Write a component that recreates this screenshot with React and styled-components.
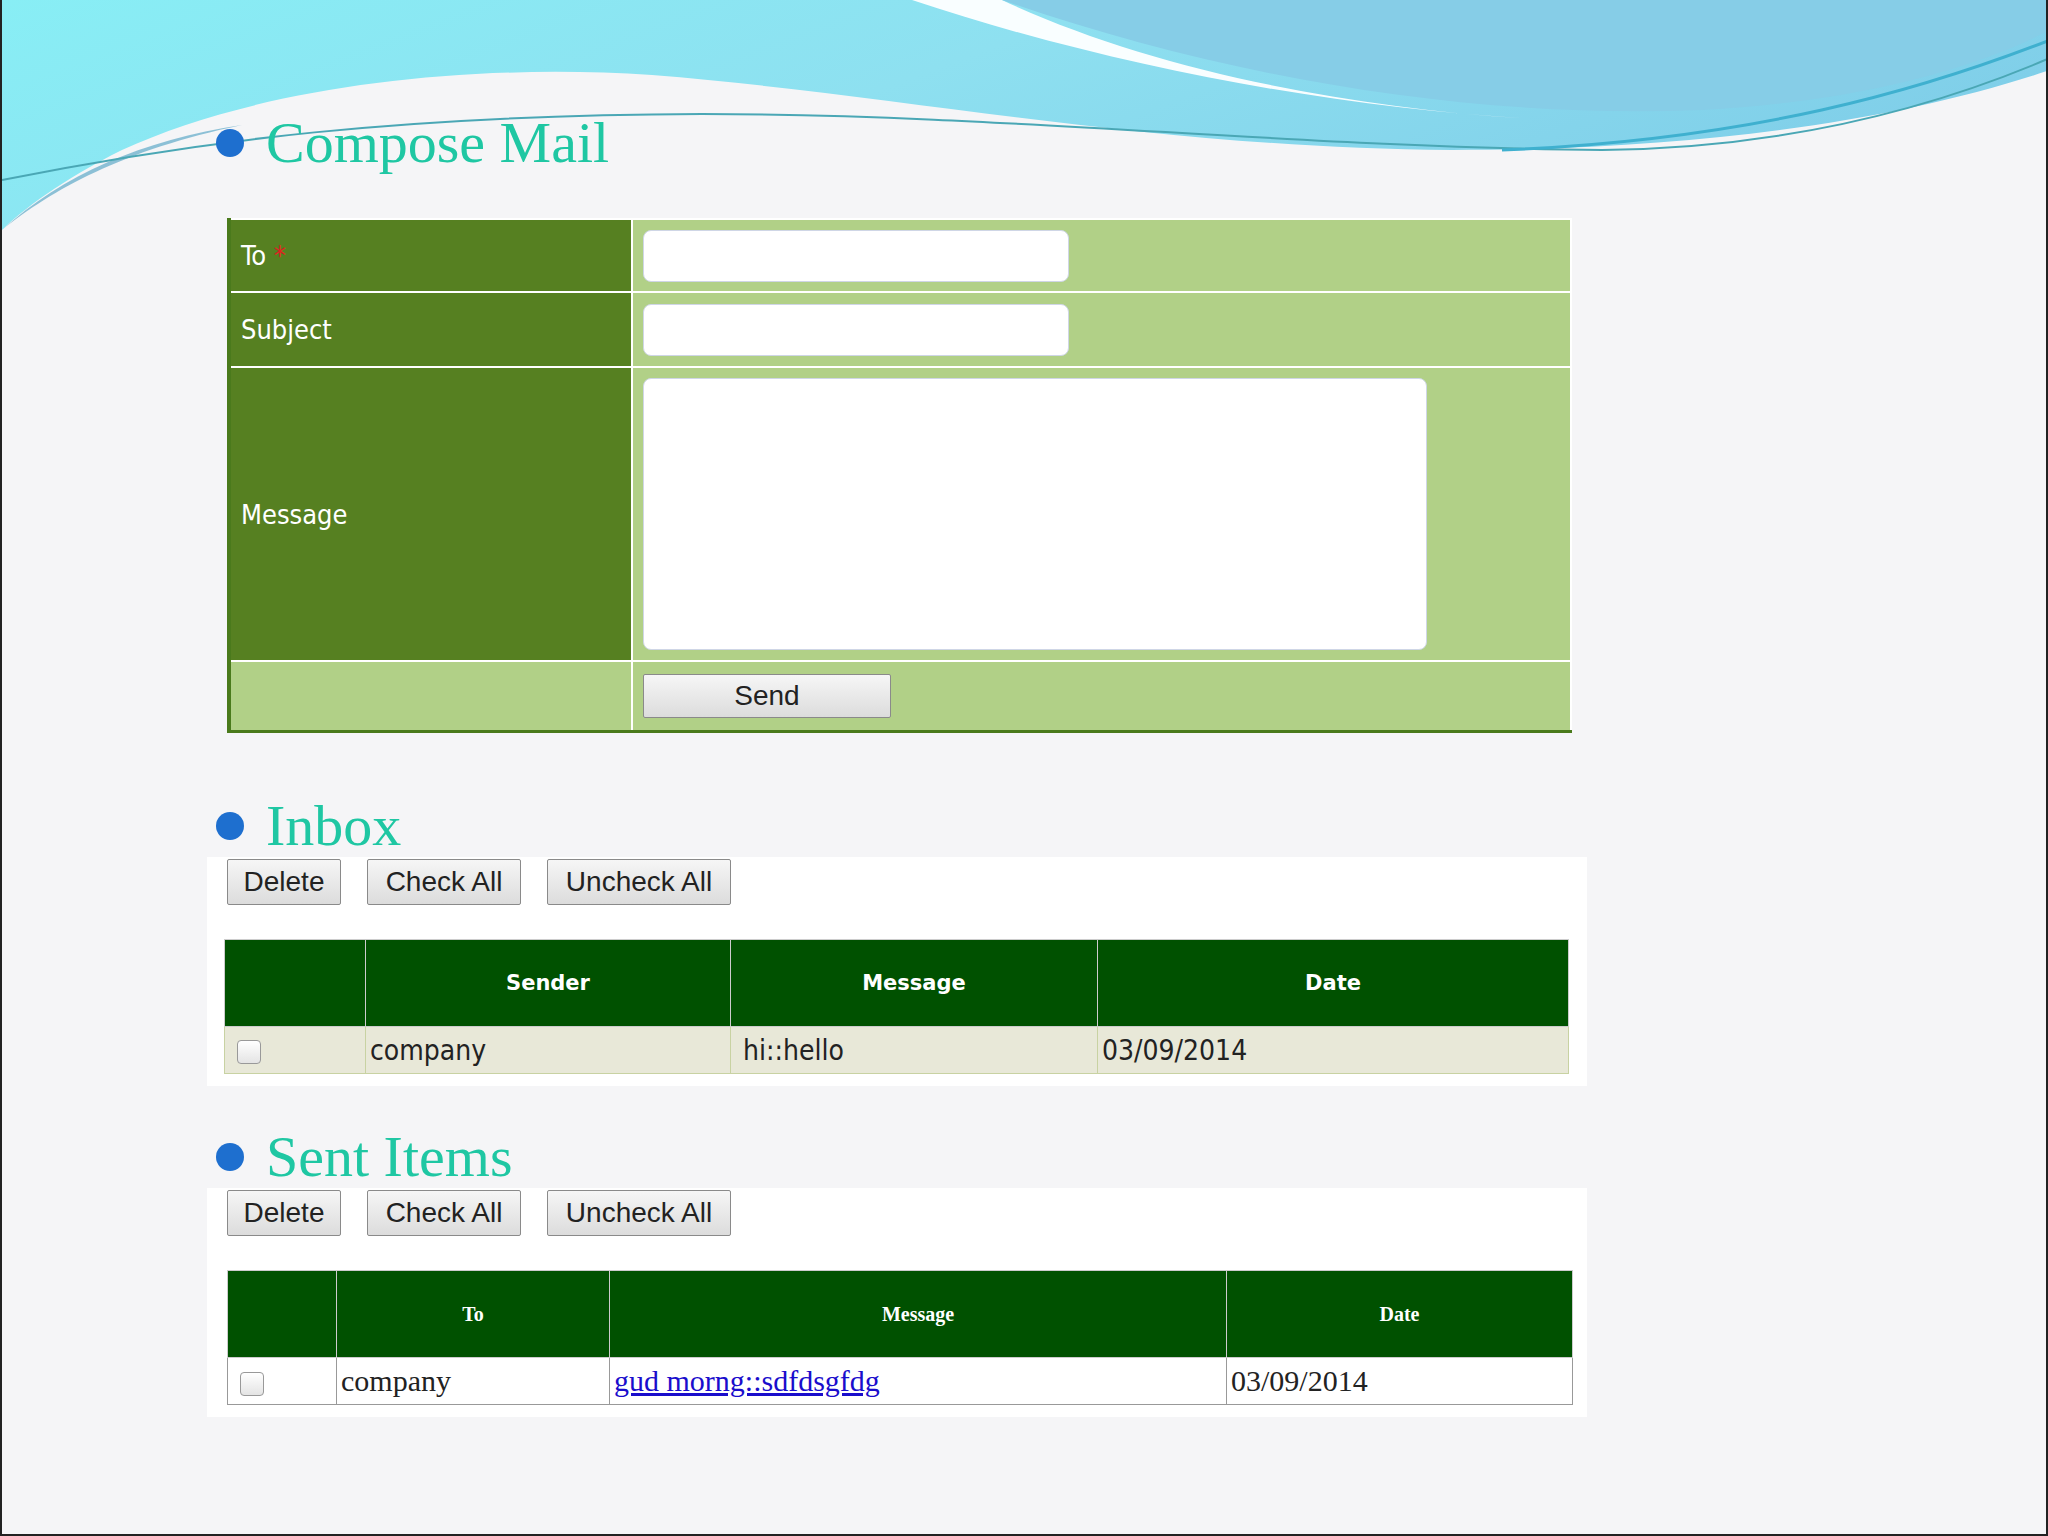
import React from "react";
import styled, { createGlobalStyle } from "styled-components";

const Global = createGlobalStyle`
  html, body { margin: 0; padding: 0; }
  body { background: #f4f4f6; font-family: "DejaVu Sans", Verdana, sans-serif; }
`;

const Page = styled.div`
  position: relative;
  width: 2048px;
  height: 1536px;
  overflow: hidden;
  background: #f5f5f7;
  box-sizing: border-box;
  border: 2px solid #222;
  border-top: none;
`;

const Wave = styled.svg`
  position: absolute;
  left: 0;
  top: 0;
`;

const Content = styled.div`
  position: relative;
  padding: 108px 0 0 212px;
  width: 1380px;
`;

const Title = styled.h2`
  display: flex;
  align-items: center;
  gap: 22px;
  margin: 0;
  font-family: "Liberation Serif", serif;
  font-weight: normal;
  font-size: 58px;
  line-height: 70px;
  color: #1fc7a3;
  &::before {
    content: "";
    width: 28px;
    height: 28px;
    border-radius: 50%;
    background: #1e6fcf;
    margin-left: 2px;
  }
`;

const FormTable = styled.table`
  margin: 40px 0 0 13px;
  width: 1345px;
  border-collapse: collapse;
  border-left: 4px solid #4a7a1c;
  border-bottom: 3px solid #4a7a1c;
  td {
    border: 2px solid #fff;
    padding: 0 10px;
  }
`;

const Label = styled.td`
  width: 380px;
  background: ${(p) => (p.$light ? "#b1d087" : "#568021")};
  color: #fff;
  font-family: "DejaVu Sans Condensed", "DejaVu Sans", sans-serif;
  font-size: 27px;
  height: ${(p) => p.$h}px;
`;

const Field = styled.td`
  background: #b1d087;
`;

const Input = styled.div`
  width: 424px;
  height: 50px;
  background: #fff;
  border: 1px solid #cfd6e6;
  border-radius: 8px;
`;

const Area = styled.div`
  width: 782px;
  height: 270px;
  background: #fff;
  border: 1px solid #cfd6e6;
  border-radius: 8px;
`;

const Btn = styled.button`
  font-family: "Liberation Sans Narrow", "Liberation Sans", Arial, sans-serif;
  font-size: 28px;
  color: #222;
  background: linear-gradient(#f6f6f6, #dcdcdc);
  border: 1px solid #8a8a8a;
  border-radius: 2px;
  height: ${(p) => p.$h || 46}px;
  width: ${(p) => p.$w}px;
  padding: 0;
`;

const Panel = styled.div`
  margin: -4px 0 0 -7px;
  width: 1380px;
  background: #fff;
  padding: 2px 0 12px 20px;
  box-sizing: border-box;
`;

const Buttons = styled.div`
  display: flex;
  gap: 26px;
  margin-bottom: 34px;
`;

const Grid = styled.table`
  border-collapse: collapse;
  width: ${(p) => p.$w}px;
  th {
    background: #005100;
    color: #fff;
    height: 84px;
    border: 1px solid #ccc;
    font-family: ${(p) => (p.$serif ? '"Liberation Serif", serif' : '"DejaVu Sans", sans-serif')};
    font-size: ${(p) => (p.$serif ? 20 : 21)}px;
    font-weight: bold;
  }
  td {
    background: ${(p) => (p.$serif ? "#fff" : "#e8e8d8")};
    border: 1px solid ${(p) => (p.$serif ? "#999" : "#c8d2a2")};
    height: 46px;
    padding: 0 4px;
    font-family: ${(p) => (p.$serif ? '"Liberation Serif", serif' : '"DejaVu Sans Condensed", "DejaVu Sans", sans-serif')};
    font-size: ${(p) => (p.$serif ? 30 : 28)}px;
    color: #222;
  }
`;

const Box = styled.span`
  display: inline-block;
  width: 22px;
  height: 22px;
  border: 1px solid #999;
  border-radius: 4px;
  background: linear-gradient(#fff, #e4e4e4);
  margin-left: 8px;
  vertical-align: middle;
`;

const Link = styled.a`
  color: #1a0dcc;
  text-decoration: underline;
`;

function Toolbar() {
  return (
    <Buttons>
      <Btn $w={114}>Delete</Btn>
      <Btn $w={154}>Check All</Btn>
      <Btn $w={184}>Uncheck All</Btn>
    </Buttons>
  );
}

export default function App() {
  return (
    <Page>
      <Global />
      <Wave width="2048" height="240" viewBox="0 0 2048 240">
        <defs>
          <linearGradient id="g1" x1="0" x2="1" y1="0" y2="0.3">
            <stop offset="0" stopColor="#88eef5" />
            <stop offset="0.5" stopColor="#8ee0f0" />
            <stop offset="1" stopColor="#80cfe9" />
          </linearGradient>
          <linearGradient id="g2" x1="0" x2="1">
            <stop offset="0" stopColor="#6cb9db" />
            <stop offset="1" stopColor="#8bd2ea" />
          </linearGradient>
        </defs>
        <path d="M0 0 H2048 V70 C1900 120 1700 150 1450 150 C1150 148 900 95 650 75 C450 62 250 90 120 150 C60 180 20 210 0 230 Z" fill="url(#g1)" />
        <path d="M0 230 C60 175 140 140 240 125 C120 150 50 190 0 230 Z" fill="#5fa9c8" opacity="0.7" />
        <path d="M910 0 H1000 C1150 70 1350 110 1550 120 C1350 110 1120 70 910 0 Z" fill="#ffffff" opacity="0.95" />
        <path d="M1000 0 C1200 70 1450 120 1700 110 C1880 100 1990 60 2048 30 V0 Z" fill="#86cde7" />
        <path d="M0 180 C200 140 400 115 700 114 C1000 114 1300 148 1600 150 C1800 148 1950 100 2048 58" stroke="#4aa7b5" strokeWidth="2" fill="none" />
        <path d="M1500 150 C1750 140 1920 90 2048 40" stroke="#3fb0cf" strokeWidth="3" fill="none" />
      </Wave>
      <Content>
        <Title>Compose Mail</Title>
        <FormTable>
          <tbody>
            <tr>
              <Label $h={71}>
                To <span style={{ color: "#e02020" }}>*</span>
              </Label>
              <Field><Input /></Field>
            </tr>
            <tr>
              <Label $h={73}>Subject</Label>
              <Field><Input /></Field>
            </tr>
            <tr>
              <Label $h={292}>Message</Label>
              <Field><Area /></Field>
            </tr>
            <tr>
              <Label $h={68} $light />
              <Field><Btn $w={248} $h={44}>Send</Btn></Field>
            </tr>
          </tbody>
        </FormTable>

        <div style={{ height: 58 }} />
        <Title>Inbox</Title>
        <Panel>
          <Toolbar />
          <Grid $w={1345} style={{ marginLeft: -3 }}>
            <thead>
              <tr>
                <th style={{ width: 138 }} />
                <th style={{ width: 362 }}>Sender</th>
                <th style={{ width: 364 }}>Message</th>
                <th>Date</th>
              </tr>
            </thead>
            <tbody>
              <tr>
                <td><Box /></td>
                <td>company</td>
                <td>&nbsp;hi::hello</td>
                <td>03/09/2014</td>
              </tr>
            </tbody>
          </Grid>
        </Panel>

        <div style={{ height: 36 }} />
        <Title>Sent Items</Title>
        <Panel>
          <Toolbar />
          <Grid $w={1346} $serif>
            <thead>
              <tr>
                <th style={{ width: 106 }} />
                <th style={{ width: 270 }}>To</th>
                <th style={{ width: 614 }}>Message</th>
                <th>Date</th>
              </tr>
            </thead>
            <tbody>
              <tr>
                <td><Box /></td>
                <td>company</td>
                <td><Link href="#">gud morng::sdfdsgfdg</Link></td>
                <td>03/09/2014</td>
              </tr>
            </tbody>
          </Grid>
        </Panel>
      </Content>
    </Page>
  );
}
